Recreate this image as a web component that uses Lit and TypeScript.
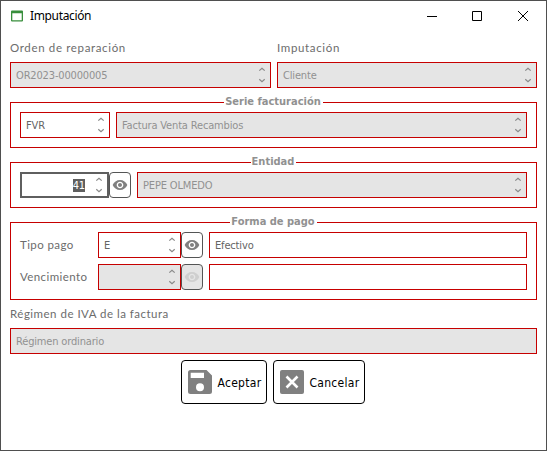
import { LitElement, html, css, svg, nothing } from "lit";
import { customElement, property } from "lit/decorators.js";

@customElement("form-field")
class FormField extends LitElement {
  @property() value = "";
  @property({ type: Boolean }) spin = false;
  @property({ type: Boolean, reflect: true }) disabled = false;
  @property({ type: Boolean, reflect: true }) active = false;

  static styles = css`
    :host {
      display: flex;
      box-sizing: border-box;
      height: 26px;
      border: 1px solid #c60000;
      background: #fff;
      color: #646464;
      padding: 0 4px 0 5px;
      align-items: center;
      min-width: 0;
    }
    :host([disabled]) { background: #e5e5e5; color: #919191; }
    :host([active]) { border: 2px solid #5f5f5f; padding: 0 4px; }
    .text {
      flex: 1;
      padding-top: 2px;
      font: 11px/14px "DejaVu Sans Condensed", "DejaVu Sans", sans-serif;
      font-stretch: condensed;
      letter-spacing: -0.16px;
      white-space: nowrap;
    }
    :host([active]) .text { text-align: right; padding-right: 10px; }
    :host([active]) mark { background: #5f5f5f; color: #fff; display: inline-block; height: 13px; line-height: 13px; }
    mark { background: none; color: inherit; }
    svg { flex: none; display: block; }
    path { fill: none; stroke: #8a8a8a; stroke-width: 1.2; }
  `;

  render() {
    return html`
      <span class="text"><mark>${this.value}</mark></span>
      ${this.spin
        ? html`<svg width="8" height="18" viewBox="0 0 8 18">
            <path d="M1.3 4.6 4 2.2 6.7 4.6M1.3 13.2 4 15.6 6.7 13.2" />
          </svg>`
        : nothing}
    `;
  }
}

const eye = svg`<path d="M12 4.5C7 4.5 2.73 7.61 1 12c1.73 4.39 6 7.5 11 7.5s9.27-3.11 11-7.5c-1.73-4.39-6-7.5-11-7.5zM12 17c-2.76 0-5-2.24-5-5s2.24-5 5-5 5 2.24 5 5-2.24 5-5 5zm0-8c-1.66 0-3 1.34-3 3s1.34 3 3 3 3-1.34 3-3-1.34-3-3-3z"/>`;

@customElement("app-root")
class AppRoot extends LitElement {
  static styles = css`
    :host { display: block; }
    .window {
      box-sizing: border-box;
      width: 547px;
      height: 451px;
      border: 1px solid #4f4f4f;
      background: #fff;
      overflow: hidden;
    }
    .titlebar { display: flex; height: 29px; align-items: center; padding: 0 17px 0 10px; }
    .titlebar svg { display: block; }
    .title {
      flex: 1;
      margin-left: 7px;
      font: 12px/16px "Noto Sans", sans-serif;
      letter-spacing: -0.35px;
      color: #000;
    }
    .controls { display: flex; gap: 35px; }
    .content { display: flex; flex-direction: column; padding: 0 9px; }
    .caption {
      font: 11.5px/14px "Lato", sans-serif;
      letter-spacing: 0.65px;
      color: #6c6c6c;
      white-space: nowrap;
    }
    .columns { display: grid; grid-template-columns: 261px 260px; gap: 7px 6px; padding-top: 11px; }
    .group {
      box-sizing: border-box;
      margin: 14px 0 0;
      padding: 0 9px 9px;
      border: 1px solid #c60000;
      display: flex;
      flex-direction: column;
      gap: 6px;
    }
    .legend {
      align-self: center;
      height: 14px;
      margin: -8px 0 -3px;
      padding: 0 2px 0 1px;
      background: #fff;
      font: bold 11px/14px "DejaVu Sans Condensed", "DejaVu Sans", sans-serif;
      font-stretch: condensed;
      color: #919191;
      white-space: nowrap;
    }
    .row { display: flex; align-items: center; }
    .row .caption { width: 78px; letter-spacing: 0.4px; }
    .wide { flex: 1; margin-left: 6px; }
    .serie { width: 90px; }
    .entity { width: 89px; }
    .pay { width: 83px; }
    .look {
      box-sizing: border-box;
      width: 22px;
      height: 26px;
      border: 1px solid #555;
      border-radius: 4px;
      background: #fff;
      padding: 0;
      display: grid;
      place-items: center;
    }
    .look svg { width: 16px; height: 16px; fill: #808080; }
    .look:disabled { background: #e5e5e5; }
    .look:disabled svg { fill: #cfcfcf; }
    .tax { display: flex; flex-direction: column; gap: 7px; margin-top: 7px; }
    .tax .caption { letter-spacing: 0.49px; }
    .actions { display: flex; justify-content: center; gap: 6px; margin-top: 6px; padding-right: 2px; }
    .action {
      box-sizing: border-box;
      height: 44px;
      border: 1px solid #000;
      border-radius: 4px;
      background: #fff;
      padding: 0 0 0 6px;
      display: flex;
      align-items: center;
      gap: 6px;
      font: 12px/16px "DejaVu Sans Condensed", "DejaVu Sans", sans-serif;
      font-stretch: condensed;
      letter-spacing: 0.28px;
      color: #000;
      white-space: nowrap;
    }
    .action span { padding-top: 1px; }
    .accept { width: 86px; }
    .cancel { width: 92px; }
    .action svg { flex: none; }
  `;

  private look(disabled = false) {
    return html`<button class="look" ?disabled=${disabled}><svg viewBox="0 0 24 24">${eye}</svg></button>`;
  }

  render() {
    return html`
      <div class="window">
        <header class="titlebar">
          <svg width="12" height="12" viewBox="0 0 12 12">
            <path fill="#388e3c" fill-rule="evenodd" d="M1 0.5h10a1 1 0 0 1 1 1v9a1 1 0 0 1-1 1H1a1 1 0 0 1-1-1v-9a1 1 0 0 1 1-1zM1.3 3.2v7h9.4v-7z" />
          </svg>
          <span class="title">Imputación</span>
          <div class="controls">
            <svg width="10" height="10"><path d="M0 5.5h10" stroke="#000" /></svg>
            <svg width="10" height="10"><path d="M.5.5h9v9h-9z" fill="none" stroke="#000" /></svg>
            <svg width="12" height="10"><path d="M1 0l10 10M11 0l-10 10" stroke="#000" /></svg>
          </div>
        </header>
        <main class="content">
          <div class="columns">
            <span class="caption">Orden de reparación</span>
            <span class="caption">Imputación</span>
            <form-field disabled spin value="OR2023-00000005"></form-field>
            <form-field disabled spin value="Cliente"></form-field>
          </div>
          <section class="group">
            <div class="legend">Serie facturación</div>
            <div class="row">
              <form-field class="serie" spin value="FVR"></form-field>
              <form-field class="wide" disabled spin value="Factura Venta Recambios"></form-field>
            </div>
          </section>
          <section class="group">
            <div class="legend">Entidad</div>
            <div class="row">
              <form-field class="entity" active spin value="41"></form-field>
              ${this.look()}
              <form-field class="wide" disabled spin value="PEPE OLMEDO"></form-field>
            </div>
          </section>
          <section class="group">
            <div class="legend">Forma de pago</div>
            <div class="row">
              <span class="caption">Tipo pago</span>
              <form-field class="pay" spin value="E"></form-field>
              ${this.look()}
              <form-field class="wide" value="Efectivo"></form-field>
            </div>
            <div class="row">
              <span class="caption">Vencimiento</span>
              <form-field class="pay" disabled spin></form-field>
              ${this.look(true)}
              <form-field class="wide"></form-field>
            </div>
          </section>
          <div class="tax">
            <span class="caption">Régimen de IVA de la factura</span>
            <form-field disabled value="Régimen ordinario"></form-field>
          </div>
          <div class="actions">
            <button class="action accept">
              <svg width="24" height="24" viewBox="0 0 24 24">
                <path fill="#808080" fill-rule="evenodd" d="M2.5 0H18.5L24 5.5V21.5A2.5 2.5 0 0 1 21.5 24H2.5A2.5 2.5 0 0 1 0 21.5V2.5A2.5 2.5 0 0 1 2.5 0zM2.7 2.7V8H16V2.7zM12 13.3a4 4 0 1 0 0 8 4 4 0 0 0 0-8z" />
              </svg>
              <span>Aceptar</span>
            </button>
            <button class="action cancel">
              <svg width="24" height="24" viewBox="0 0 24 24">
                <rect width="24" height="24" rx="2" fill="#808080" />
                <path d="M6.5 6.5l11 11M17.5 6.5l-11 11" stroke="#fff" stroke-width="2.6" />
              </svg>
              <span>Cancelar</span>
            </button>
          </div>
        </main>
      </div>
    `;
  }
}
